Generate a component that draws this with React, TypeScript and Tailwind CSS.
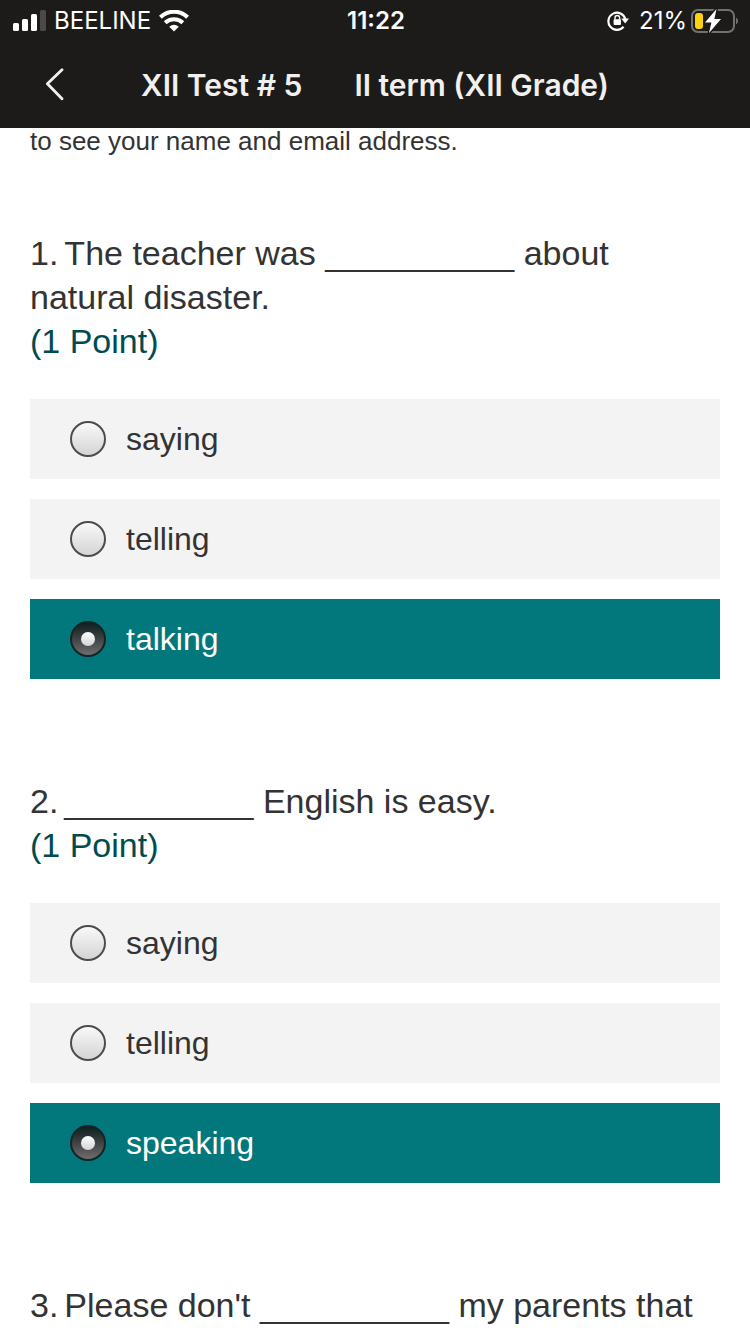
import { useState } from "react";

const questions = [
  {
    id: 1,
    text: "The teacher was __________ about natural disaster.",
    options: ["saying", "telling", "talking"],
    selected: "talking",
  },
  {
    id: 2,
    text: "__________ English is easy.",
    options: ["saying", "telling", "speaking"],
    selected: "speaking",
  },
  {
    id: 3,
    text: "Please don't __________ my parents that",
    options: [],
    selected: "",
  },
];

type QuestionProps = (typeof questions)[number];

const StatusBar = () => {
  return (
    <div className="grid h-[42px] grid-cols-[1fr_auto_1fr] items-center pl-[13px] pr-[11px] text-[24px] leading-7 text-white">
      <div className="flex items-center">
        <svg width="33" height="22" viewBox="0 0 33 22" fill="white">
          <rect x="0" y="13" width="6" height="8" rx="1.5" />
          <rect x="9" y="9" width="6" height="12" rx="1.5" />
          <rect x="18" y="4" width="6" height="17" rx="1.5" />
          <rect x="27" y="0" width="6" height="21" rx="1.5" fill="#4b4a49" />
        </svg>
        <span className="ml-2">BEELINE</span>
        <svg className="ml-2" width="30" height="22" viewBox="0 0 30 22" fill="none" stroke="white">
          <path d="M1.4 7.3A19.5 19.5 0 0 1 28.6 7.3" strokeWidth="4.2" />
          <path d="M6.2 12.7A12.8 12.8 0 0 1 23.8 12.7" strokeWidth="4" />
          <path d="M10.2 16.7A7.6 7.6 0 0 1 19.8 16.7L15 21.4Z" fill="white" stroke="none" />
        </svg>
      </div>
      <span className="font-semibold">11:22</span>
      <div className="flex items-center justify-end">
        <svg width="22" height="22" viewBox="0 0 22 22" fill="none">
          <path d="M16.6 16.8A8.6 8.6 0 1 1 18.3 9" stroke="white" strokeWidth="2.2" />
          <path d="M14.2 8.4H22L18.2 13.6Z" fill="white" />
          <rect x="6.6" y="9.2" width="7.4" height="5.8" rx="1" fill="white" />
          <path d="M8 9.8V7.8a2.3 2.3 0 0 1 4.6 0V9.8" stroke="white" strokeWidth="1.4" />
        </svg>
        <span className="ml-2.5">21%</span>
        <svg className="ml-1" width="48" height="26" viewBox="0 0 48 26">
          <rect x="1" y="2" width="42" height="22" rx="6" fill="none" stroke="#72716f" strokeWidth="2" />
          <path d="M45 9.5a4 4 0 0 1 0 7Z" fill="#72716f" />
          <path d="M25.5 1L14 14.6H20.4L18 25L30 10.9H23.4Z" fill="white" stroke="#1c1b19" strokeWidth="3" paintOrder="stroke" />
          <rect x="4" y="5" width="8" height="16" rx="3" fill="#fbd20e" />
        </svg>
      </div>
    </div>
  );
};

const Question = ({ id, text, options, selected }: QuestionProps) => {
  const [value, setValue] = useState(selected);

  return (
    <fieldset>
      <legend className="text-[34px] leading-[44px]">
        <span className="mr-1.5">{`${id}.`}</span>
        {text}
        {options.length > 0 && <span className="block text-[#004b50]">(1 Point)</span>}
      </legend>
      {options.length > 0 && (
        <div className="mt-9 flex flex-col gap-5">
          {options.map(option => (
            <label
              key={option}
              className="flex h-20 items-center gap-5 bg-[#f3f3f3] px-10 text-[32px] leading-10 has-checked:bg-[#03787c] has-checked:text-white"
            >
              <input
                type="radio"
                name={`question-${id}`}
                value={option}
                checked={value === option}
                onChange={() => setValue(option)}
                className="grid size-9 shrink-0 appearance-none place-items-center rounded-full border-2 border-[#4c4c4c] bg-linear-to-b from-[#fbfbfb] to-[#d2d2d2] bg-origin-border checked:border-[#122426] checked:from-[#0c1a1b] checked:to-[#777274] checked:before:size-3.5 checked:before:rounded-full checked:before:bg-linear-to-b checked:before:from-white checked:before:to-[#d4d4d4]"
              />
              <span>{option}</span>
            </label>
          ))}
        </div>
      )}
    </fieldset>
  );
};

export default function App() {
  return (
    <div className="bg-white font-['Liberation_Sans',Arial,sans-serif] text-[#333333]">
      <header className="bg-[#1c1b19] font-[Inter,sans-serif]">
        <StatusBar />
        <div className="grid h-[86px] grid-cols-[1fr_auto_1fr] items-center text-[30px] leading-9 text-[#f1f0ee]">
          <button aria-label="Back" className="ml-[45px] justify-self-start">
            <svg width="20" height="34" viewBox="0 0 20 34" fill="none" stroke="currentColor" strokeWidth="2.8" strokeLinecap="round" strokeLinejoin="round">
              <path d="M17 1.8L2.4 15.8L17 30.8" />
            </svg>
          </button>
          <h1 className="flex gap-[52px] font-semibold">
            <span>XII Test # 5</span>
            <span>II term (XII Grade)</span>
          </h1>
        </div>
      </header>
      <main className="px-[30px]">
        <p className="text-[26px] leading-[26px]">to see your name and email address.</p>
        <div className="mt-[77px] flex flex-col gap-[100px]">
          {questions.map(question => (
            <Question key={question.id} {...question} />
          ))}
        </div>
      </main>
    </div>
  );
}
